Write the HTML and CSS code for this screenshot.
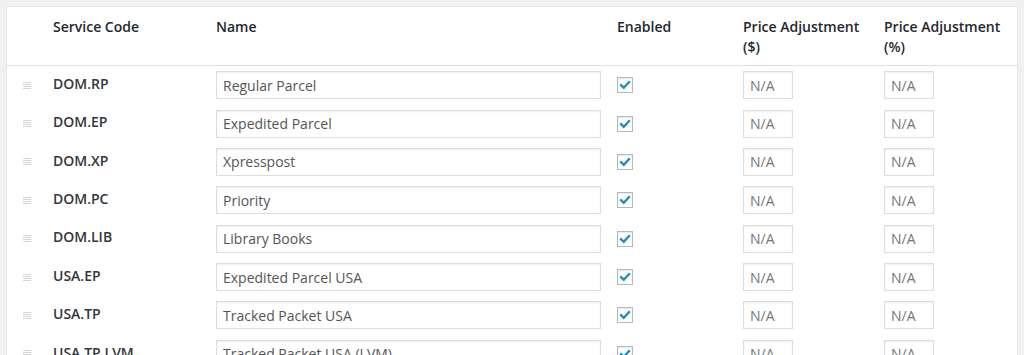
FILE: index.html
```html
<!DOCTYPE html>
<html lang="en">
  <head>
    <meta charset="UTF-8" />
    <title>Services</title>
    <link rel="stylesheet" href="styles.css">
  </head>
  <body>
    <div class="panel">
      <table class="services">
        <colgroup>
          <col class="c-sort" />
          <col class="c-code" />
          <col class="c-name" />
          <col class="c-enabled" />
          <col class="c-price" />
          <col class="c-pct" />
        </colgroup>
        <thead>
          <tr>
            <th></th>
            <th>Service Code</th>
            <th>Name</th>
            <th>Enabled</th>
            <th>Price Adjustment ($)</th>
            <th>Price Adjustment (%)</th>
          </tr>
        </thead>
        <tbody>
          <tr>
            <td><span class="handle"></span></td>
            <td class="code">DOM.RP</td>
            <td><input class="name-input" type="text" value="Regular Parcel" /></td>
            <td><span class="check"><svg viewBox="0 0 16 16"><path d="M3.5 8.2 L6.6 11.2 L12.6 4.6" /></svg></span></td>
            <td><input class="adj-input" type="text" placeholder="N/A" /></td>
            <td><input class="adj-input" type="text" placeholder="N/A" /></td>
          </tr>
          <tr>
            <td><span class="handle"></span></td>
            <td class="code">DOM.EP</td>
            <td><input class="name-input" type="text" value="Expedited Parcel" /></td>
            <td><span class="check"><svg viewBox="0 0 16 16"><path d="M3.5 8.2 L6.6 11.2 L12.6 4.6" /></svg></span></td>
            <td><input class="adj-input" type="text" placeholder="N/A" /></td>
            <td><input class="adj-input" type="text" placeholder="N/A" /></td>
          </tr>
          <tr>
            <td><span class="handle"></span></td>
            <td class="code">DOM.XP</td>
            <td><input class="name-input" type="text" value="Xpresspost" /></td>
            <td><span class="check"><svg viewBox="0 0 16 16"><path d="M3.5 8.2 L6.6 11.2 L12.6 4.6" /></svg></span></td>
            <td><input class="adj-input" type="text" placeholder="N/A" /></td>
            <td><input class="adj-input" type="text" placeholder="N/A" /></td>
          </tr>
          <tr>
            <td><span class="handle"></span></td>
            <td class="code">DOM.PC</td>
            <td><input class="name-input" type="text" value="Priority" /></td>
            <td><span class="check"><svg viewBox="0 0 16 16"><path d="M3.5 8.2 L6.6 11.2 L12.6 4.6" /></svg></span></td>
            <td><input class="adj-input" type="text" placeholder="N/A" /></td>
            <td><input class="adj-input" type="text" placeholder="N/A" /></td>
          </tr>
          <tr>
            <td><span class="handle"></span></td>
            <td class="code">DOM.LIB</td>
            <td><input class="name-input" type="text" value="Library Books" /></td>
            <td><span class="check"><svg viewBox="0 0 16 16"><path d="M3.5 8.2 L6.6 11.2 L12.6 4.6" /></svg></span></td>
            <td><input class="adj-input" type="text" placeholder="N/A" /></td>
            <td><input class="adj-input" type="text" placeholder="N/A" /></td>
          </tr>
          <tr>
            <td><span class="handle"></span></td>
            <td class="code">USA.EP</td>
            <td><input class="name-input" type="text" value="Expedited Parcel USA" /></td>
            <td><span class="check"><svg viewBox="0 0 16 16"><path d="M3.5 8.2 L6.6 11.2 L12.6 4.6" /></svg></span></td>
            <td><input class="adj-input" type="text" placeholder="N/A" /></td>
            <td><input class="adj-input" type="text" placeholder="N/A" /></td>
          </tr>
          <tr>
            <td><span class="handle"></span></td>
            <td class="code">USA.TP</td>
            <td><input class="name-input" type="text" value="Tracked Packet USA" /></td>
            <td><span class="check"><svg viewBox="0 0 16 16"><path d="M3.5 8.2 L6.6 11.2 L12.6 4.6" /></svg></span></td>
            <td><input class="adj-input" type="text" placeholder="N/A" /></td>
            <td><input class="adj-input" type="text" placeholder="N/A" /></td>
          </tr>
          <tr>
            <td><span class="handle"></span></td>
            <td class="code">USA.TP.LVM</td>
            <td><input class="name-input" type="text" value="Tracked Packet USA (LVM)" /></td>
            <td><span class="check"><svg viewBox="0 0 16 16"><path d="M3.5 8.2 L6.6 11.2 L12.6 4.6" /></svg></span></td>
            <td><input class="adj-input" type="text" placeholder="N/A" /></td>
            <td><input class="adj-input" type="text" placeholder="N/A" /></td>
          </tr>
        </tbody>
      </table>
    </div>
  </body>
</html>
```

FILE: styles.css
```css
* {
  box-sizing: border-box;
  margin: 0;
  padding: 0;
}

body {
  background: #f1f1f1;
  padding: 6px;
  font-family: "Open Sans", "Noto Sans", sans-serif;
  font-size: 14px;
  color: #32373c;
  overflow: hidden;
  height: 355px;
}

.panel {
  background: #fff;
  border: 1px solid #e5e5e5;
  box-shadow: 0 1px 1px rgba(0, 0, 0, 0.04);
  width: 1012px;
}

.services {
  width: 1010px;
  table-layout: fixed;
  border-collapse: collapse;
}

.c-sort { width: 36px; }
.c-code { width: 163px; }
.c-name { width: 401px; }
.c-enabled { width: 126px; }
.c-price { width: 141px; }
.c-pct { width: 143px; }

.services th {
  text-align: left;
  vertical-align: top;
  font-weight: 600;
  color: #23282d;
  line-height: 20px;
  padding: 10px 10px 8px;
  border-bottom: 1px solid #e1e1e1;
}

.services td {
  vertical-align: middle;
  padding: 5.2px 10px;
  line-height: 20px;
}

.services td.code {
  font-weight: 600;
  color: #32373c;
  padding-bottom: 6.5px;
  padding-top: 4px;
}

.handle {
  display: block;
  width: 8px;
  height: 7px;
  margin-left: 6px;
  background: repeating-linear-gradient(to bottom, #d4d4d4 0, #d4d4d4 1px, transparent 1px, transparent 2px);
}

input {
  font-family: "Open Sans", "Noto Sans", sans-serif;
  font-size: 14px;
  height: 28px;
  border: 1px solid #ddd;
  box-shadow: inset 0 1px 2px rgba(0, 0, 0, 0.07);
  background: #fff;
  color: #555;
  padding: 0 6px;
  outline: none;
  display: block;
}

input::placeholder {
  color: #72777c;
  opacity: 1;
}

.name-input {
  width: 385px;
}

.adj-input {
  width: 50px;
}

.check {
  display: block;
  width: 16px;
  height: 16px;
  border: 1px solid #b4b9be;
  background: #fff;
  box-shadow: inset 0 1px 2px rgba(0, 0, 0, 0.1);
}

.check svg {
  display: block;
  width: 14px;
  height: 14px;
}

.check path {
  fill: none;
  stroke: #1e8cbe;
  stroke-width: 2.6;
  stroke-linecap: square;
}
```
